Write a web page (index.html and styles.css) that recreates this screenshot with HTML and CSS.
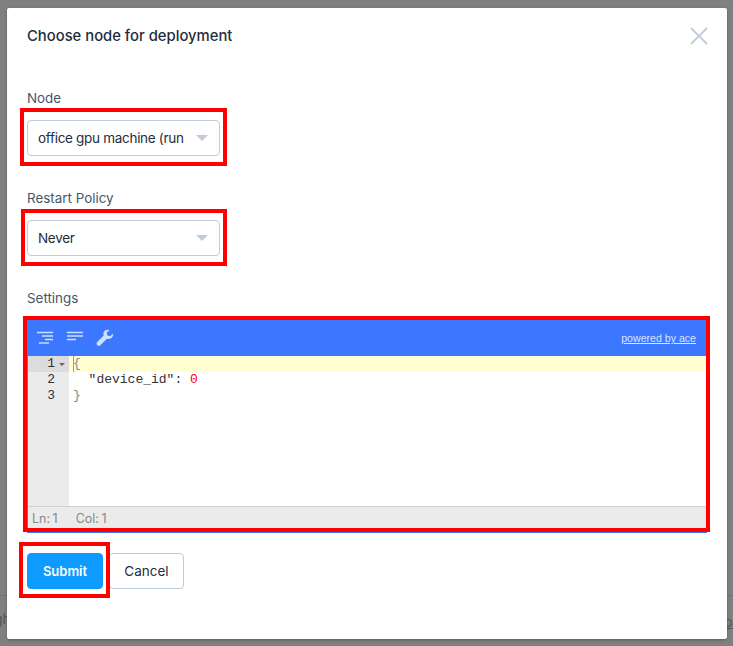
FILE: index.html
```html
<!DOCTYPE html>
<html lang="en">
<head>
<meta charset="utf-8">
<title>Choose node for deployment</title>
<link rel="stylesheet" href="styles.css">
</head>
<body>
<div class="backdrop-line"></div>
<span class="backdrop-text left">gh</span>
<span class="backdrop-text right">oo</span>
<main class="modal">
  <header class="modal-head">
    <h1>Choose node for deployment</h1>
    <svg class="close" width="18" height="18" viewBox="0 0 18 18" aria-label="Close"><path d="M1 1L17 17M17 1L1 17"/></svg>
  </header>
  <div class="field field-node">
    <label>Node</label>
    <div class="select"><span>office gpu machine (run</span><i class="caret"></i></div>
  </div>
  <div class="field field-policy">
    <label>Restart Policy</label>
    <div class="select"><span>Never</span><i class="caret"></i></div>
  </div>
  <div class="field field-settings">
    <label>Settings</label>
    <div class="editor">
      <div class="toolbar">
        <svg class="tool" width="18" height="14" viewBox="0 0 18 14"><path d="M1 1.5H17M6 5H17M9 8.500H17M3 12H13"/></svg>
        <svg class="tool" width="17" height="14" viewBox="0 0 17 14"><path d="M1 1.500H17M1 5H17M1 8.500H10"/></svg>
        <svg class="wrench" width="18" height="18" viewBox="0 0 18 18"><path d="M17 4.400l-2.900 2.800-2.700-.7-.7-2.700L13.500 1C11.300.300 9 .900 8 2.700c-.8 1.400-.7 2.700-.2 3.900L1.200 13c-.9.900-.9 2.200 0 3.200.9.900 2.200.900 3.100 0l6.600-6.500c1.300.5 2.800.4 4-.4 1.700-1.100 2.600-3.100 2.100-4.900z"/></svg>
        <a class="powered">powered by ace</a>
      </div>
      <div class="code">
        <div class="gutter">
          <div class="gnum active">1<i class="fold"></i></div>
          <div class="gnum">2</div>
          <div class="gnum">3</div>
        </div>
        <div class="lines">
          <div class="line active"><span class="cursor"></span><span class="punct">{</span></div>
          <div class="line">  "device_id": <span class="num">0</span></div>
          <div class="line"><span class="punct">}</span></div>
        </div>
      </div>
      <div class="status"><span>Ln: 1</span><span>Col: 1</span></div>
    </div>
  </div>
  <div class="actions">
    <button class="btn primary">Submit</button>
    <button class="btn">Cancel</button>
  </div>
</main>
<div class="mark mark-node"></div>
<div class="mark mark-policy"></div>
<div class="mark mark-settings"></div>
<div class="mark mark-submit"></div>
</body>
</html>
```
FILE: styles.css
```css
* { box-sizing: border-box; }
html, body { margin: 0; height: 646px; overflow: hidden; }
body {
  position: relative;
  background: #808080;
  font-family: Inter, "Liberation Sans", sans-serif;
  padding: 8px 6px 7px 7px;
}
.backdrop-line { position: absolute; left: 0; right: 0; top: 595px; height: 1px; background: #747474; }
.backdrop-text { position: absolute; top: 610px; font-size: 14px; color: #555; }
.backdrop-text.left { left: -6px; }
.backdrop-text.right { right: -8px; text-decoration: underline; top: 613px; }
.modal {
  position: relative;
  width: 720px;
  height: 631px;
  background: #fff;
  border-radius: 2px;
  padding: 0 20px;
  box-shadow: 0 1px 3px rgba(0,0,0,.3);
}
.modal-head { display: flex; justify-content: space-between; align-items: center; height: 55px; }
.modal-head h1 { margin: 0; font-size: 14.8px; font-weight: 500; color: #1f2d3d; }
.close { margin-right: -1px; }
.close path { stroke: #c0ccda; stroke-width: 1.800; fill: none; }
.field label { display: block; font-size: 13.4px; line-height: 20px; color: #475669; margin-bottom: 12px; }
.field-node { margin-top: 25px; }
.field-policy { margin-top: 32px; }
.field-settings { margin-top: 32px; }
.select {
  display: flex; align-items: center; justify-content: space-between;
  width: 193px; height: 36px;
  border: 1px solid #c0ccda; border-radius: 4px;
  padding: 0 11px 0 10px;
  font-size: 13.5px; letter-spacing: -0.3px; color: #1f2d3d;
  background: #fff;
}
.select span { white-space: nowrap; overflow: hidden; width: 148px; }
.caret { width: 0; height: 0; border-left: 6px solid transparent; border-right: 6px solid transparent; border-top: 6px solid #c0ccda; }
.editor {
  width: 680px; height: 213px;
  margin-top: 0;
  display: flex; flex-direction: column;
  border-left: 1px solid #3b78ff; border-bottom: 4px solid #3b78ff;
  background: #fff;
}
.toolbar { height: 36px; background: #3b78ff; display: flex; align-items: center; padding: 0 11px 0 8px; flex: none; }
.tool { margin-right: 12px; }
.tool:nth-child(2) { margin-right: 13px; }
.tool path { stroke: #cfe0ff; stroke-width: 1.600; fill: none; }
.wrench { width: 18px; height: 18px; }
.wrench path { fill: #cfe0ff; }
.powered { margin-left: auto; font-size: 10.6px; color: #d8e5ff; text-decoration: underline; font-family: "Liberation Sans", sans-serif; }
.code { flex: 1; display: flex; min-height: 0; font-family: "Liberation Mono", monospace; font-size: 13px; line-height: 16px; color: #333; }
.gutter { width: 41px; background: #ebebeb; flex: none; }
.gnum { height: 16px; padding-right: 14px; text-align: right; position: relative; color: #333; }
.gnum.active { background: #dcdcdc; }
.fold { position: absolute; right: 4px; top: 7px; width: 0; height: 0; border-left: 3px solid transparent; border-right: 3px solid transparent; border-top: 3px solid #666; }
.lines { flex: 1; min-width: 0; }
.line { height: 16px; padding-left: 4px; white-space: pre; position: relative; }
.line.active { background: #ffffd0; }
.cursor { position: absolute; left: 4px; top: 0; width: 1px; height: 16px; background: #a0a070; }
.punct { color: #888; }
.num { color: #ff0000; }
.status { height: 23px; flex: none; display: flex; gap: 18px; align-items: center; padding-left: 4px; background: #ebebeb; border-top: 1px solid #d0d0d0; font-size: 12.5px; color: #888; word-spacing: -1px; }
.actions { display: flex; gap: 6px; margin-top: 20px; }
.btn { height: 36px; border: 1px solid #c0ccda; border-radius: 4px; background: #fff; width: 75px; padding: 0; font: 13.500px Inter, "Liberation Sans", sans-serif; color: #1f2d3d; }
.btn.primary { width: 76px; font-size: 13px; background: #0d9bff; border-color: #0d9bff; color: #fff; font-weight: 600; }
.mark { position: absolute; border: 4px solid #ff0000; pointer-events: none; }
.mark-node { left: 20px; top: 108px; width: 207px; height: 58px; }
.mark-policy { left: 21px; top: 209px; width: 206px; height: 57px; }
.mark-settings { left: 23px; top: 316px; width: 687px; height: 216px; }
.mark-submit { left: 19px; top: 542px; width: 91px; height: 56px; }
```
